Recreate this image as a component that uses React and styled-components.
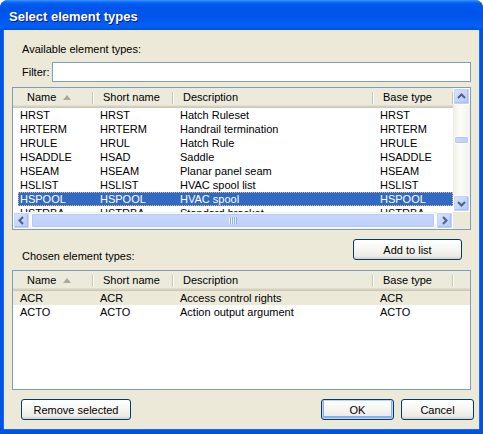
import React from 'react';
import styled, {createGlobalStyle, css} from 'styled-components';

const GlobalStyle = createGlobalStyle`
	html, body {
		margin: 0;
		padding: 0;
		background: #ffffff;
	}
	body {
		font-family: "Liberation Sans", Arial, sans-serif;
		font-size: 11px;
		color: #000000;
	}
	* {
		box-sizing: border-box;
	}
`;

const Window = styled.div`
	width: 483px;
	height: 434px;
	display: flex;
	flex-direction: column;
	background: #0054e3;
	border-radius: 8px 8px 0 0;
	overflow: hidden;
`;

const TitleBar = styled.div`
	height: 30px;
	flex: none;
	display: flex;
	align-items: center;
	padding: 3px 0 0 9px;
	background: linear-gradient(to bottom,
		#3d95ff 0%, #0a66f5 8%, #0058ee 16%, #0054e8 40%,
		#0056ec 60%, #005cf4 75%, #0260f6 88%, #0050dc 100%);
	color: #ffffff;
	font-family: "Liberation Sans", Arial, sans-serif;
	font-weight: bold;
	font-size: 13px;
	text-shadow: 1px 1px 0 #0a1883;
`;

const Client = styled.div`
	flex: 1;
	margin: 0 4px 5px 4px;
	background: #ece9d8;
	display: flex;
	flex-direction: column;
	padding: 13px 8px 9px 8px;
	box-shadow: -1px 0 0 #1c6bf0, 1px 0 0 #1c6bf0, 0 1px 0 #1c6bf0;
`;

const Label = styled.div`
	margin-left: 10px;
	margin-top: ${props => props.$top || 0}px;
	height: 13px;
	line-height: 13px;
	white-space: nowrap;
`;

const FilterRow = styled.div`
	display: flex;
	align-items: center;
	height: 20px;
	margin-top: 6px;
	padding-left: 10px;
`;

const FilterLabel = styled.label`
	width: 30px;
	flex: none;
`;

const TextInput = styled.input`
	flex: 1;
	height: 20px;
	border: 1px solid #7f9db9;
	background: #ffffff;
	outline: none;
	margin: 0;
	padding: 0 3px;
	font: inherit;
`;

const ListFrame = styled.div`
	height: ${props => props.$height}px;
	margin-top: ${props => props.$top}px;
	border: 1px solid #7f9db9;
	background: #ffffff;
	display: grid;
	overflow: hidden;
	${props => props.$scroll && css`
		grid-template-columns: 1fr 17px;
		grid-template-rows: 1fr 17px;
	`}
`;

const ListMain = styled.div`
	overflow: hidden;
	min-width: 0;
	min-height: 0;
`;

const Header = styled.div`
	display: grid;
	grid-template-columns: 80px 80px 200px 80px;
	height: 20px;
	background: #ebeadb;
	box-shadow: inset 0 -1px 0 #cbc7b8, inset 0 -2px 0 #d6d2c2, inset 0 -3px 0 #e2decd;
`;

const HeaderCell = styled.div`
	position: relative;
	padding-left: ${props => (props.$first ? 14 : 10)}px;
	line-height: 19px;
	white-space: nowrap;

	&::after {
		content: '';
		position: absolute;
		right: 0;
		top: 4px;
		bottom: 4px;
		width: 1px;
		background: #c7c5b2;
		box-shadow: 1px 0 0 #ffffff;
	}
`;

const SortArrow = styled.span`
	display: inline-block;
	margin-left: 7px;
	width: 0;
	height: 0;
	border-left: 4.5px solid transparent;
	border-right: 4.5px solid transparent;
	border-bottom: 5px solid #aca899;
	vertical-align: 1px;
`;

const Row = styled.div`
	display: grid;
	grid-template-columns: ${props => (props.$indent ? '75px' : '80px')} 80px 200px 80px;
	margin-left: ${props => (props.$indent ? 5 : 0)}px;
	height: 14px;
	line-height: 14px;
	${props => props.$selected && css`
		background: #316ac5;
		color: #ffffff;
		outline: 1px dotted #e3c16c;
		outline-offset: -1px;
	`}
	${props => props.$inactive && css`
		background: #ece9d8;
	`}
`;

const Cell = styled.div`
	padding-left: ${props => (props.$tight ? 2 : 7)}px;
	white-space: nowrap;
	overflow: hidden;
`;

const VScroll = styled.div`
	display: flex;
	flex-direction: column;
	background: linear-gradient(to right, #eeede5, #fcfcf9 40%, #f3f1ec);
`;

const HScroll = styled.div`
	display: flex;
	background: linear-gradient(to bottom, #eeede5, #fcfcf9 40%, #f3f1ec);
`;

const Corner = styled.div`
	background: #ece9d8;
`;

const ScrollButton = styled.div`
	width: 17px;
	height: 17px;
	flex: none;
	display: flex;
	align-items: center;
	justify-content: center;
	border: 1px solid #ffffff;
	border-radius: 2px;
	background: linear-gradient(135deg, #dbe5fd 0%, #c5d5fb 50%, #b4c8f6 100%);
	box-shadow: inset 0 0 0 1px #c3d3fd, inset -1px -1px 0 1px #a9bff0;
`;

const Track = styled.div`
	flex: 1;
	display: flex;
	flex-direction: column;
`;

const VThumb = styled.div`
	margin: 31px 1px 0 1px;
	height: 8px;
	border: 1px solid #ffffff;
	border-radius: 2px;
	background: linear-gradient(to right, #c9d8fc, #bdd0fa);
	box-shadow: inset 0 0 0 1px #b2c8f7;
`;

const HThumb = styled.div`
	flex: 1;
	margin: 1px 1px;
	display: flex;
	align-items: center;
	justify-content: center;
	border: 1px solid #ffffff;
	border-radius: 2px;
	background: linear-gradient(to bottom, #c9d8fc, #bdd0fa);
	box-shadow: inset 0 0 0 1px #b2c8f7;
`;

const Grip = styled.div`
	width: 8px;
	height: 7px;
	background: repeating-linear-gradient(to right, #eef4fe 0 1px, #8cb0f8 1px 2px);
`;

const AddRow = styled.div`
	display: flex;
	justify-content: space-between;
	align-items: flex-start;
	margin-top: 9px;
`;

const Button = styled.button`
	width: ${props => props.$width}px;
	height: 21px;
	margin: 0;
	padding: 0;
	border: 1px solid #003c74;
	border-radius: 3px;
	background: linear-gradient(to bottom, #ffffff 0%, #f4f4f0 55%, #ecebe6 85%, #d6d0c5 100%);
	font-family: "Liberation Sans", Arial, sans-serif;
	font-size: 11px;
	color: #000000;
	${props => props.$default && css`
		box-shadow: inset 0 0 0 1px #bed3f8, inset 0 -1px 0 2px #89adf0;
	`}
`;

const ButtonRow = styled.div`
	display: flex;
	align-items: center;
	margin: 9px -3px 0 9px;
`;

const Spacer = styled.div`
	flex: 1;
`;

const Arrow = ({dir}) => {
	const rot = {up: 0, down: 180, left: -90, right: 90}[dir];
	return (
		<svg width="9" height="9" viewBox="0 0 9 9" style={{transform: `rotate(${rot}deg)`}}>
			<path d="M1 6 L4.5 2.5 L8 6" fill="none" stroke="#4d6185" strokeWidth="2" />
		</svg>
	);
};

const available = [
	['HRST', 'HRST', 'Hatch Ruleset', 'HRST'],
	['HRTERM', 'HRTERM', 'Handrail termination', 'HRTERM'],
	['HRULE', 'HRUL', 'Hatch Rule', 'HRULE'],
	['HSADDLE', 'HSAD', 'Saddle', 'HSADDLE'],
	['HSEAM', 'HSEAM', 'Planar panel seam', 'HSEAM'],
	['HSLIST', 'HSLIST', 'HVAC spool list', 'HSLIST'],
	['HSPOOL', 'HSPOOL', 'HVAC spool', 'HSPOOL'],
	['HSTRBA', 'HSTRBA', 'Standard bracket', 'HSTRBA'],
];

const chosen = [
	['ACR', 'ACR', 'Access control rights', 'ACR'],
	['ACTO', 'ACTO', 'Action output argument', 'ACTO'],
];

const ColumnHeader = () => (
	<Header>
		<HeaderCell $first>Name<SortArrow /></HeaderCell>
		<HeaderCell>Short name</HeaderCell>
		<HeaderCell>Description</HeaderCell>
		<HeaderCell>Base type</HeaderCell>
	</Header>
);

const App = () => {
	return (
		<>
			<GlobalStyle />
			<Window>
				<TitleBar>Select element types</TitleBar>
				<Client>
					<Label>Available element types:</Label>
					<FilterRow>
						<FilterLabel>Filter:</FilterLabel>
						<TextInput type="text" />
					</FilterRow>

					<ListFrame $height={143} $top={5} $scroll>
						<ListMain>
							<ColumnHeader />
							{available.map((item) => (
								<Row key={item[0]} $indent $selected={item[0] === 'HSPOOL'}>
									<Cell $tight>{item[0]}</Cell>
									<Cell>{item[1]}</Cell>
									<Cell>{item[2]}</Cell>
									<Cell>{item[3]}</Cell>
								</Row>
							))}
						</ListMain>
						<VScroll>
							<ScrollButton><Arrow dir="up" /></ScrollButton>
							<Track><VThumb /></Track>
							<ScrollButton><Arrow dir="down" /></ScrollButton>
						</VScroll>
						<HScroll>
							<ScrollButton><Arrow dir="left" /></ScrollButton>
							<HThumb><Grip /></HThumb>
							<ScrollButton><Arrow dir="right" /></ScrollButton>
						</HScroll>
						<Corner />
					</ListFrame>

					<AddRow>
						<Label $top={11}>Chosen element types:</Label>
						<Button $width={109} style={{marginRight: 9}}>Add to list</Button>
					</AddRow>

					<ListFrame $height={120} $top={7}>
						<ListMain>
							<ColumnHeader />
							{chosen.map((item) => (
								<Row key={item[0]} $inactive={item[0] === 'ACR'}>
									<Cell>{item[0]}</Cell>
									<Cell>{item[1]}</Cell>
									<Cell>{item[2]}</Cell>
									<Cell>{item[3]}</Cell>
								</Row>
							))}
						</ListMain>
					</ListFrame>

					<ButtonRow>
						<Button $width={110}>Remove selected</Button>
						<Spacer />
						<Button $width={73} $default>OK</Button>
						<Button $width={73} style={{marginLeft: 7}}>Cancel</Button>
					</ButtonRow>
				</Client>
			</Window>
		</>
	);
};

export default App;
